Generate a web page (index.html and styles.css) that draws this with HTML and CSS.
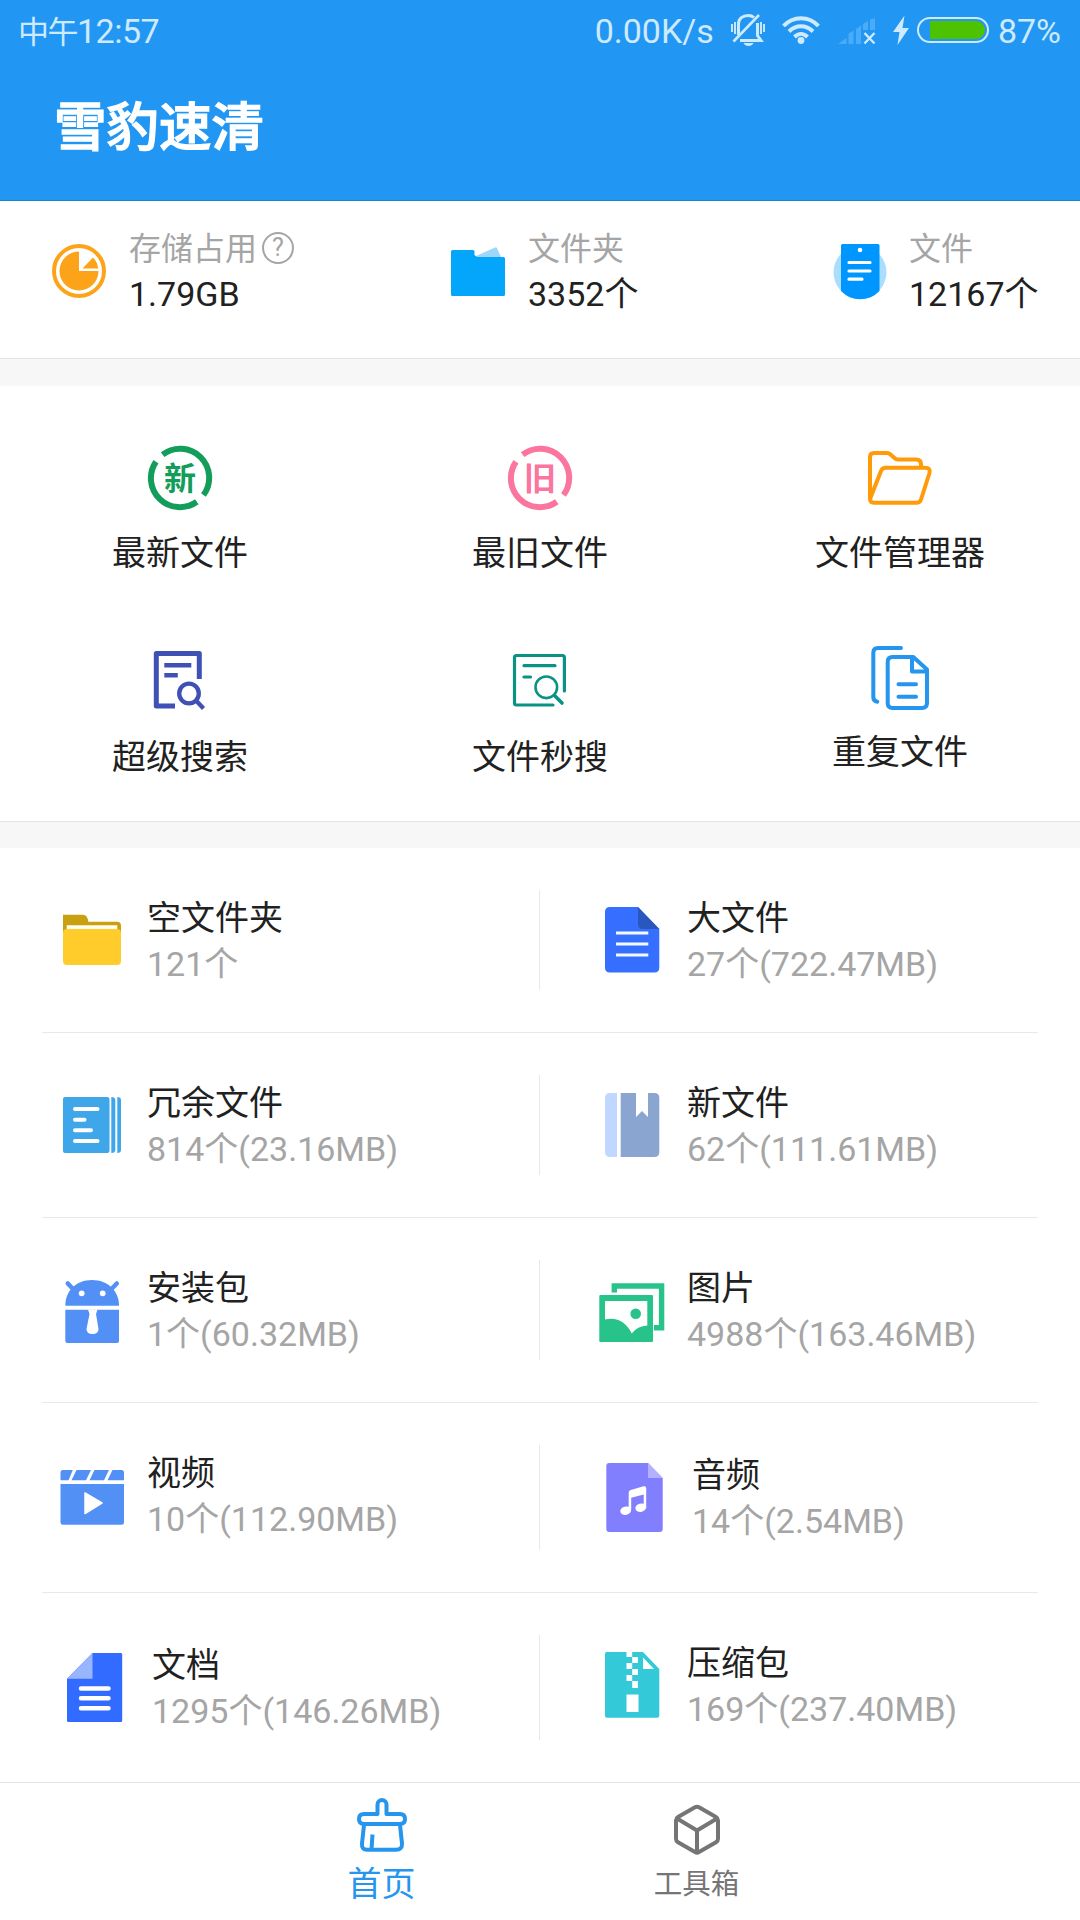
FILE: index.html
```html
<!DOCTYPE html>
<html lang="zh-CN">
<head>
<meta charset="UTF-8">
<meta name="viewport" content="width=device-width, initial-scale=1.0">
<title>雪豹速清</title>
<link rel="stylesheet" href="styles.css">
</head>
<body>
<div class="app">
    <header class="header">
        <div class="status-bar">
            <div class="status-time"><span class="period">中午</span>12:57</div>
            <div class="status-right">
                <span class="speed">0.00K/s</span>
                <svg class="bell" width="34" height="32" viewBox="0 0 34 32" fill="none" stroke="#cdeaff">
                    <path d="M7.500 21V10C7.500 4.500 12 1.500 17 1.500c2.500 0 4.500.6 6 2M26.500 9v12.500l3.500 5H9" stroke-width="3"/>
                    <path d="M2.500 27.500L28 1" stroke-width="2.600"/>
                    <path d="M1 10v8M4 8v12M30 8v12M33 10v8" stroke-width="1.900"/>
                    <path d="M12.500 29h10c-1 2-2.500 3-5 3s-4-1-5-3z" fill="#cdeaff" stroke="none"/>
                </svg>
                <svg class="wifi" width="38" height="28" viewBox="0 0 38 28" fill="none" stroke="#cdeaff" stroke-width="4">
                    <path d="M1.500 10C11-.5 27-.5 36.500 10M7 15.500c7-7 17-7 24 0M12.500 21c4-4 9-4 13 0"/>
                    <circle cx="19" cy="24.500" r="3.400" fill="#cdeaff" stroke="none"/>
                </svg>
                <svg class="signal" width="37" height="26" viewBox="0 0 37 26">
                    <path d="M0 26l8.500-6v6zM10.500 26V15.500l5-3V26zM18 26V11l5-3.500V26zM25 12V6l5-3v9zM32 12V1.500L37 0v12z" fill="#4aabf9"/>
                    <path d="M26.500 15l10 10.500M36.500 15l-10 10.500" stroke="#cdeaff" stroke-width="2.400"/>
                </svg>
                <svg class="bolt" width="16" height="28" viewBox="0 0 16 28">
                    <path d="M11.500-.5L0 16h6.500L4.500 29 16 12H9.500z" fill="#cdeaff"/>
                </svg>
                <div class="battery"><div class="battery-level"></div></div>
                <span>87%</span>
            </div>
        </div>
        <h1>雪豹速清</h1>
    </header>

    <section class="stats">
        <div class="stat">
            <svg width="54" height="54" viewBox="0 0 54 54">
                <circle cx="27" cy="27" r="25" fill="none" stroke="#fca31a" stroke-width="4"/>
                <path d="M27 27V7.500A19.500 19.500 0 1 0 46.500 27z" fill="#fca31a"/>
                <path d="M30.500 24.500L41 13.500q4.500 4.500 5.200 11z" fill="#fca31a"/>
            </svg>
            <div>
                <div class="stat-label">存储占用<span class="help">?</span></div>
                <div class="stat-value">1.79GB</div>
            </div>
        </div>
        <div class="stat">
            <svg width="54" height="54" viewBox="0 0 54 54">
                <path d="M24 12.500L44 3.500q1.500-.5 2 .8L50.500 14H24z" fill="#9fd7fb"/>
                <path d="M1.500 6H22q1.500 0 1.500 1.500V11l2.500 2h26.500q1.500 0 1.500 1.500v36q0 1.500-1.500 1.500h-51Q0 52 0 50.500v-43Q0 6 1.500 6z" fill="#04a6fc"/>
            </svg>
            <div>
                <div class="stat-label">文件夹</div>
                <div class="stat-value">3352个</div>
            </div>
        </div>
        <div class="stat">
            <svg width="54" height="55" viewBox="0 0 54 55">
                <circle cx="27" cy="28.300" r="26.500" fill="#abddff"/>
                <path d="M9.500 0h35.500q1.500 0 1.500 1.500V47A26.500 26.500 0 0 1 8 47V1.500Q8 0 9.500 0z" fill="#0096ff"/>
                <circle cx="27" cy="6" r="2.300" fill="#fff"/>
                <path d="M16 18.500h21M16 27h21M16 35.200h13" stroke="#fff" stroke-width="3.200" stroke-linecap="round"/>
            </svg>
            <div>
                <div class="stat-label">文件</div>
                <div class="stat-value">12167个</div>
            </div>
        </div>
    </section>

    <section class="actions">
        <div class="action">
            <svg width="64" height="64" viewBox="0 0 64 64">
                <path d="M14.600 8.700A29 29 0 0 1 55.500 49M48.800 55.700A29 29 0 0 1 8 15.700" fill="none" stroke="#129d5a" stroke-width="6"/>
                <text x="32" y="44" class="circle-text" fill="#129d5a">新</text>
            </svg>
            <span>最新文件</span>
        </div>
        <div class="action">
            <svg width="64" height="64" viewBox="0 0 64 64">
                <path d="M14.600 8.700A29 29 0 0 1 55.500 49M48.800 55.700A29 29 0 0 1 8 15.700" fill="none" stroke="#fa769f" stroke-width="6"/>
                <text x="32" y="44" class="circle-text" fill="#fa769f">旧</text>
            </svg>
            <span>最旧文件</span>
        </div>
        <div class="action">
            <svg width="64" height="64" viewBox="0 0 64 64" fill="none" stroke="#ff9b08" stroke-width="4" stroke-linejoin="round">
                <path d="M2 52V11q0-4 4-4h13q2 0 3.500 1.500l4 3.500q1.500 1.500 3.500 1.500h18q5 0 5 4.500v3.500"/>
                <path d="M2 53L13 25q1.300-3.300 4.500-3.300H57q6 0 4.500 5.300L53 53.500q-1 3.200-4 3.200H6q-4 0-4-3.700z"/>
            </svg>
            <span>文件管理器</span>
        </div>
        <div class="action lower">
            <svg width="64" height="64" viewBox="0 0 64 64" fill="none" stroke="#3f51b5" stroke-width="5">
                <path d="M51.300 31V5.500h-43V58H27" stroke-linejoin="round"/>
                <path d="M16.300 17.300h27M16.300 27.300h13.500" stroke-width="4.500"/>
                <circle cx="41" cy="45.500" r="9.800" stroke-width="4.300"/>
                <path d="M48 52.500l7.500 8" stroke-width="4.300"/>
            </svg>
            <span>超级搜索</span>
        </div>
        <div class="action lower">
            <svg width="64" height="64" viewBox="0 0 64 64" fill="none" stroke="#0a9284" stroke-width="3.200" stroke-linecap="round">
                <path d="M56.400 43V9.500q0-2-2-2H8.500q-2 0-2 2V55q0 2 2 2H45" />
                <path d="M16 17.700h31M16 29h6.500"/>
                <circle cx="38.300" cy="39.300" r="10.800" stroke-width="2.600"/>
                <path d="M46.500 47.500l7.500 7.500" stroke-width="3.600"/>
            </svg>
            <span>文件秒搜</span>
        </div>
        <div class="action lower short">
            <svg width="64" height="64" viewBox="0 0 64 64" fill="none" stroke="#2695ee" stroke-width="4" stroke-linecap="round" stroke-linejoin="round">
                <path d="M33 0H10Q5.300 0 5.300 5v44q0 4 4 4.700"/>
                <path d="M24.500 9h20.800L59 21.500V55q0 5-5 5H24.500q-4.800 0-4.800-5V14q0-5 4.800-5z"/>
                <path d="M44 9.500v14h14.500M30.500 36.300h17.500M30.500 48.700h17.500"/>
            </svg>
            <span>重复文件</span>
        </div>
    </section>

    <section class="categories">
        <div class="row">
            <div class="category">
                <svg width="64" height="64" viewBox="0 0 64 64">
                    <path d="M3 6.700h20q4.500 0 5.300 7H57q4 0 4 4V26H3z" fill="#c9a110"/>
                    <path d="M6.700 17.300h50.600V26H6.700z" fill="#fffdf0"/>
                    <rect x="3" y="21" width="58" height="36" rx="4" fill="#ffcc2c"/>
                </svg>
                <div class="info"><div class="name">空文件夹</div><div class="detail">121个</div></div>
            </div>
            <div class="category">
                <svg width="64" height="64" viewBox="0 0 64 64">
                    <path d="M10-1h28l21.300 22v38.500q0 5-5 5H10q-5 0-5-5V4q0-5 5-5z" fill="#366eff"/>
                    <path d="M38-1l21.300 22H43q-5 0-5-5z" fill="#2857bd"/>
                    <path d="M16 25h32.300M16 36h32.300M16 47h32.300" stroke="#f2fbff" stroke-width="3"/>
                </svg>
                <div class="info"><div class="name">大文件</div><div class="detail">27个(722.47MB)</div></div>
            </div>
        </div>
        <div class="row">
            <div class="category">
                <svg width="64" height="64" viewBox="0 0 64 64">
                    <path d="M5 4h42q2.500 0 2.500 2.500v51q0 2.500-2.500 2.500H5q-2 0-2-2V6q0-2 2-2zM51.300 4q4 0 4 3v50q0 3-4 3zM57.300 4Q61 4 61 7v50q0 3-3.700 3z" fill="#3fa6ea"/>
                    <path d="M15 16h22.500M15 26.700h9.500M15 37.300h16M15 48h22.500" stroke="#fff" stroke-width="4" stroke-linecap="round"/>
                </svg>
                <div class="info"><div class="name">冗余文件</div><div class="detail">814个(23.16MB)</div></div>
            </div>
            <div class="category">
                <svg width="64" height="64" viewBox="0 0 64 64">
                    <path d="M17 0h-7Q5 0 5 5v54q0 5 5 5h7z" fill="#c0d8ff"/>
                    <path d="M20.700 0H36v24l6-6 6 6V0h6.300q5 0 5 5v54q0 5-5 5H20.700z" fill="#8ba5d1"/>
                </svg>
                <div class="info"><div class="name">新文件</div><div class="detail">62个(111.61MB)</div></div>
            </div>
        </div>
        <div class="row">
            <div class="category">
                <svg width="64" height="64" viewBox="0 0 64 64" fill="#5290f6">
                    <path d="M5.300 27.700C5.300 13 16 2 32 2s27 11 27 25.700z"/>
                    <path d="M7.800 5.500L14 12M56.800 5.500L50.500 12" stroke="#5290f6" stroke-width="4.500" stroke-linecap="round"/>
                    <path d="M5.300 31.700H59V63q0 2-2 2H7.300q-2 0-2-2z"/>
                    <circle cx="21.700" cy="15.300" r="2.900" fill="#fff"/>
                    <circle cx="42.700" cy="15.300" r="2.900" fill="#fff"/>
                    <path d="M28 31.500h9.500L36 36l2.500 15q0 5-6 5t-6-5L29.500 36z" fill="#fff"/>
                </svg>
                <div class="info"><div class="name">安装包</div><div class="detail">1个(60.32MB)</div></div>
            </div>
            <div class="category">
                <svg width="64" height="64" viewBox="0 0 64 64">
                    <path d="M14.300 14.500V8h47.300v41.800H54" fill="none" stroke="#28c38a" stroke-width="5.400"/>
                    <rect x="-.7" y="17" width="53.700" height="47" rx="1" fill="#28c38a"/>
                    <path d="M5 23h42.300v24.500q-10 .5-15.600 8C27 45 17 38.500 5 41.500z" fill="#fff"/>
                    <circle cx="35.700" cy="35.700" r="5.300" fill="#28c38a"/>
                </svg>
                <div class="info"><div class="name">图片</div><div class="detail">4988个(163.46MB)</div></div>
            </div>
        </div>
        <div class="row">
            <div class="category">
                <svg width="64" height="64" viewBox="0 0 64 64" fill="#5290f6">
                    <path d="M3 7h9.800L8.500 17.300h-8v-8Q.5 7 3 7zM16.500 7H31l-5 10.300H11.500zM34.500 7H49l-5 10.300H29.500zM52.500 7h9q2.500 0 2.500 2.500v7.800H47.500z"/>
                    <path d="M.5 21H64v38.500q0 2.200-2.500 2.200H3q-2.500 0-2.500-2.200z"/>
                    <path d="M25 30l17 10-17 10.500z" fill="#fff" stroke="#fff" stroke-width="1.500" stroke-linejoin="round"/>
                </svg>
                <div class="info"><div class="name">视频</div><div class="detail">10个(112.90MB)</div></div>
            </div>
            <div class="category large">
                <svg width="69" height="69" viewBox="0 0 69 69">
                    <path d="M9.300 0H48l14.700 15v51q0 3-3 3H9.300q-3 0-3-3V3q0-3 3-3z" fill="#827fff"/>
                    <path d="M48 0l14.700 15H48z" fill="#b3b1ff"/>
                    <g fill="#fff">
                        <ellipse cx="25.700" cy="47.700" rx="5.500" ry="4.200" transform="rotate(-15 25.700 47.700)"/>
                        <ellipse cx="40.800" cy="44.700" rx="5.500" ry="4.200" transform="rotate(-15 40.800 44.700)"/>
                        <path d="M28.700 47V29.500q0-2 2-2.500l13-3.700q2.500-.6 2.500 1.700v20h-2.500V31.500l-12.500 3.200V47z"/>
                    </g>
                </svg>
                <div class="info"><div class="name">音频</div><div class="detail">14个(2.54MB)</div></div>
            </div>
        </div>
        <div class="row">
            <div class="category large">
                <svg width="69" height="69" viewBox="0 0 69 69">
                    <path d="M32.500 0H61q1.200 0 1.200 1.500v66q0 1.500-1.200 1.500H8.300Q7 69 7 67.500V25.700z" fill="#326bff"/>
                    <path d="M32.500 0v25.700H7z" fill="#9ab5ff"/>
                    <path d="M21 35.500h27.500M21 45.300h27.500M21 55.300h27.500" stroke="#fff" stroke-width="4.500" stroke-linecap="round"/>
                </svg>
                <div class="info"><div class="name">文档</div><div class="detail">1295个(146.26MB)</div></div>
            </div>
            <div class="category">
                <svg width="64" height="64" viewBox="0 0 64 64">
                    <path d="M7-1h36l16.300 17v46.700q0 2-2 2H7q-2 0-2-2V1q0-2 2-2z" fill="#33c9d8"/>
                    <path d="M43 4.500V16h11zM26.500-1h5.700v5h-5.700zM32.200 4h5.700v6h-5.700zM26.500 10h5.700v6h-5.700zM32.200 16h5.700v6h-5.700zM26.500 22h5.700v6h-5.700zM32.200 28h5.700v7h-5.700zM26.500 41.500h12v17.500h-12z" fill="#fff"/>
                </svg>
                <div class="info"><div class="name">压缩包</div><div class="detail">169个(237.40MB)</div></div>
            </div>
        </div>
    </section>

    <nav class="bottom-nav">
        <div class="nav-item active">
            <svg width="54" height="56" viewBox="0 0 54 56" fill="none" stroke="#2695ee" stroke-width="4">
                <path d="M22.500 18V8.500a4.500 4.500 0 0 1 9 0V18H45q5 0 5 5t-5 5H9q-5 0-5-5t5-5z" stroke-linejoin="round"/>
                <path d="M9 29L7 47.500Q6.500 53.800 12 53.800h29q6.500 0 6-6.300L45 29M17.500 38.500l-1 15"/>
            </svg>
            <span>首页</span>
        </div>
        <div class="nav-item">
            <svg width="54" height="56" viewBox="0 0 54 56" fill="none" stroke="#757575" stroke-width="4" stroke-linejoin="round">
                <path d="M25 11.300q2-1.200 4 0L46 21q2 1.200 2 3.300V43q0 2-2 3.200L29 56q-2 1.200-4 0L8 46.200Q6 45 6 43V24.300Q6 22.200 8 21z"/>
                <path d="M7 22.500l20 12 20-12M27 34.500v22"/>
            </svg>
            <span>工具箱</span>
        </div>
    </nav>
</div>
</body>
</html>
```
FILE: styles.css
```css
* {
    box-sizing: border-box;
}
body {
    margin: 0;
    font-family: Roboto, "Noto Sans CJK SC", sans-serif;
    background-color: #fff;
    color: #212121;
}
.app {
    width: 1080px;
    height: 1920px;
    display: flex;
    flex-direction: column;
    overflow: hidden;
}
svg {
    display: block;
    flex-shrink: 0;
    overflow: visible;
}
.header {
    height: 201px;
    background-color: #2196f3;
    border-bottom: 1px solid #2182c8;
}
.status-bar {
    height: 62px;
    padding: 0 19px 0 18px;
    display: flex;
    justify-content: space-between;
    align-items: center;
    color: #cdeaff;
    font-size: 34px;
    line-height: 62px;
}
.period {
    font-size: 31px;
    letter-spacing: -1.500px;
}
.status-time {
    padding-top: 1px;
    letter-spacing: -0.500px;
}
.status-right {
    display: flex;
    align-items: center;
}
.bell {
    margin: 0 17px 2px;
}
.wifi {
    margin: 0 18px 2px 0;
}
.signal {
    margin-right: 18px;
}
.bolt {
    margin: 0 8px 2px 0;
}
.battery {
    width: 72px;
    height: 26px;
    margin: 0 9px 2px 0;
    padding: 2px 2px 2px 11px;
    border: 2px solid #cdeaff;
    border-radius: 13px;
}
.battery-level {
    height: 18px;
    background-color: #4cc200;
    border-radius: 0 9px 9px 0;
}
h1 {
    margin: 28px 0 0 54px;
    font-size: 52.500px;
    line-height: 76px;
    font-weight: 500;
    color: #fff;
    -webkit-text-stroke: 1.300px #fff;
}
.stats {
    height: 158px;
    padding: 25px 0 0 52px;
    border-bottom: 1px solid #e4e4e4;
    display: grid;
    grid-template-columns: 399px 382px auto;
}
.stat {
    display: flex;
    align-items: flex-start;
}
.stat svg {
    margin: 18px 23px 0 0;
}
.stat:last-child svg {
    margin-right: 22px;
}
.stat-label {
    display: flex;
    align-items: center;
    font-size: 32px;
    line-height: 46px;
    color: #a5a5a5;
}
.help {
    width: 32px;
    height: 32px;
    margin: 0 0 2px 5px;
    border: 2px solid #a5a5a5;
    border-radius: 50%;
    font-size: 25px;
    line-height: 28px;
    text-align: center;
}
.stat-value {
    font-size: 34px;
    line-height: 44px;
}
.actions {
    height: 463px;
    padding-top: 60px;
    border-top: 27px solid #f7f7f7;
    border-bottom: 1px solid #e4e4e4;
    display: grid;
    grid-template-columns: repeat(3, 360px);
    grid-auto-rows: 204px;
}
.action {
    display: flex;
    flex-direction: column;
    align-items: center;
    font-size: 34px;
    line-height: 46px;
}
.action svg {
    margin: 0 0 20px;
}
.action.lower svg {
    margin: -2px 0 22px;
}
.action.short svg {
    margin-bottom: 17px;
}
.circle-text {
    font-size: 32px;
    font-weight: 700;
    text-anchor: middle;
}
.categories {
    padding: 0 42px;
    border-top: 26px solid #f7f7f7;
}
.row {
    display: flex;
    padding: 42px 0;
    border-bottom: 1px solid #e8e8e8;
}
.row:last-child {
    border-bottom: none;
}
.category {
    width: 498px;
    padding-left: 60px;
    display: flex;
    align-items: flex-start;
}
.category:first-child {
    padding-left: 18px;
    border-right: 1px solid #e8e8e8;
}
.category svg {
    margin: 18px 23px 18px 0;
}
.info {
    padding-top: 5px;
    font-size: 34px;
    line-height: 46px;
}
.large .info {
    padding-top: 7px;
}
.detail {
    color: #a5a5a5;
}
.bottom-nav {
    flex-grow: 1;
    padding: 13px 2px 0 0;
    border-top: 1px solid #e4e4e4;
    display: flex;
    justify-content: center;
}
.nav-item {
    width: 315px;
    display: flex;
    flex-direction: column;
    align-items: center;
    font-size: 28.500px;
    line-height: 46px;
    color: #757575;
}
.nav-item svg {
    margin-bottom: 10px;
}
.nav-item.active {
    font-size: 34px;
    color: #2695ee;
}
.nav-item.active svg {
    margin-bottom: 9px;
}
```
